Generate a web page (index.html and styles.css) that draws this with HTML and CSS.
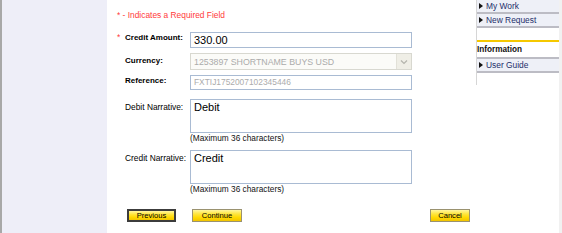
FILE: index.html
```html
<!DOCTYPE html>
<html>
<head>
<meta charset="utf-8">
<title>Credit</title>
<link rel="stylesheet" href="styles.css">
</head>
<body>
<div class="page">
  <div class="leftnav"></div>
  <div class="main">
    <p class="note">* - Indicates a Required Field</p>
    <div class="form">
      <div class="row r-amount">
        <span class="star">*</span>
        <span class="lbl bold">Credit Amount:</span>
        <div class="field input">330.00</div>
      </div>
      <div class="row r-currency">
        <span class="star"></span>
        <span class="lbl bold">Currency:</span>
        <div class="field select">
          <span class="sel-text">1253897 SHORTNAME BUYS USD</span>
          <span class="sel-arrow"><svg width="8" height="6" viewBox="0 0 8 6"><path d="M1 1.5 L4 4.5 L7 1.5" fill="none" stroke="#b4b4ac" stroke-width="1.2"/></svg></span>
        </div>
      </div>
      <div class="row r-ref">
        <span class="star"></span>
        <span class="lbl bold">Reference:</span>
        <div class="field input ref">FXTIJ1752007102345446</div>
      </div>
      <div class="row r-debit">
        <span class="star"></span>
        <span class="lbl narr">Debit Narrative:</span>
        <div class="narr-col">
          <div class="field textarea">Debit</div>
          <div class="hint">(Maximum 36 characters)</div>
        </div>
      </div>
      <div class="row r-credit">
        <span class="star"></span>
        <span class="lbl narr">Credit Narrative:</span>
        <div class="narr-col">
          <div class="field textarea">Credit</div>
          <div class="hint">(Maximum 36 characters)</div>
        </div>
      </div>
    </div>
    <div class="buttons">
      <button class="btn btn-default">Previous</button>
      <button class="btn btn-continue">Continue</button>
      <button class="btn btn-cancel">Cancel</button>
    </div>
  </div>
  <div class="rightnav">
    <div class="item"><span class="tri"></span>My Work</div>
    <div class="item"><span class="tri"></span>New Request</div>
    <div class="info-head">Information</div>
    <div class="item"><span class="tri"></span>User Guide</div>
  </div>
  <div class="edge"></div>
</div>
</body>
</html>
```

FILE: styles.css
```css
html, body {
  margin: 0;
  padding: 0;
  background: #ffffff;
}
body {
  font-family: "Liberation Sans", Arial, sans-serif;
  color: #000;
  width: 562px;
  height: 233px;
  overflow: hidden;
}
.page {
  display: flex;
  height: 233px;
}
.leftnav {
  width: 105px;
  border-left: 2px solid #a8a8a8;
  background: #eeeef8;
  flex: none;
}
.main {
  flex: 1;
  padding: 9px 0 0 10px;
  min-width: 0;
}
.note {
  margin: 0;
  font-size: 8.4px;
  line-height: 12px;
  color: #ff3a3a;
}
.form {
  margin-top: 11px;
}
.row {
  display: grid;
  grid-template-columns: 8px 65px 222px;
  align-items: start;
}
.star {
  color: #ff3a3a;
  font-size: 8.4px;
  line-height: 11px;
}
.lbl {
  font-size: 8.4px;
  line-height: 11px;
}
.lbl.bold {
  font-weight: bold;
  font-size: 8px;
}
.lbl.narr {
  padding-top: 3px;
}
.field {
  box-sizing: border-box;
  border: 1px solid #a9bbd3;
  background: #fff;
  white-space: nowrap;
  overflow: hidden;
}
.input {
  height: 16px;
  font-size: 11px;
  line-height: 14px;
  padding: 0 3px;
}
.r-amount .lbl {
  padding-top: 0;
}
.r-currency {
  margin-top: 5px;
}
.r-currency .lbl {
  padding-top: 2px;
}
.select {
  height: 17px;
  display: flex;
  align-items: center;
  border-color: #d8d8d0;
  background: #fbfbf8;
  color: #ababab;
  font-size: 8.8px;
  padding-left: 3px;
}
.sel-text {
  flex: 1;
}
.sel-arrow {
  width: 14px;
  height: 15px;
  background: #efeee6;
  border-left: 1px solid #e2e1d8;
  display: flex;
  align-items: center;
  justify-content: center;
}
.r-ref {
  margin-top: 5px;
}
.ref {
  height: 15px;
  font-size: 8.4px;
  line-height: 13px;
  color: #acacac;
}
.r-debit {
  margin-top: 9px;
}
.r-credit {
  margin-top: 7px;
}
.textarea {
  height: 34px;
  font-size: 11px;
  line-height: 13px;
  padding: 1px 3px;
}
.hint {
  font-size: 8.3px;
  line-height: 10px;
  margin-top: 0;
  color: #111;
}
.buttons {
  display: flex;
  align-items: center;
  margin-top: 15px;
  padding-left: 10px;
  padding-right: 6px;
}
.btn {
  box-sizing: border-box;
  height: 13px;
  padding: 0;
  font-family: "Liberation Sans", Arial, sans-serif;
  font-size: 7.6px;
  line-height: 10px;
  color: #000;
  background: linear-gradient(#fff6a0 0%, #ffe640 35%, #ffd800 70%, #f2c400 100%);
  border: 1px solid #9a9270;
  text-align: center;
}
.btn-default {
  width: 49px;
  border: 2px solid #3c3c3c;
}
.btn-continue {
  width: 50px;
  margin-left: 16px;
}
.btn-cancel {
  width: 40px;
  margin-left: auto;
}
.rightnav {
  width: 82px;
  height: 85px;
  border-left: 1px solid #d6d6d6;
  flex: none;
}
.item {
  height: 12px;
  line-height: 12px;
  background: #eef0f7;
  border-bottom: 2px solid #bcbcc4;
  font-size: 8.4px;
  color: #1d2f6a;
  padding-left: 2px;
  display: flex;
  align-items: center;
  white-space: nowrap;
}
.tri {
  width: 0;
  height: 0;
  border-top: 3px solid transparent;
  border-bottom: 3px solid transparent;
  border-left: 4px solid #111;
  margin-right: 3px;
}
.info-head {
  margin-top: 12px;
  border-top: 2px solid #f5c800;
  border-bottom: 2px solid #bcbcc4;
  height: 15px;
  line-height: 15px;
  font-size: 8.2px;
  font-weight: bold;
  color: #111;
}
.edge {
  width: 3px;
  background: #f1f1f1;
  flex: none;
}
```
